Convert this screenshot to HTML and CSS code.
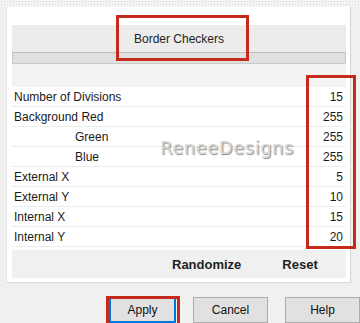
FILE: index.html
```html
<!DOCTYPE html>
<html lang="en">
<head>
  <meta charset="UTF-8" />
  <meta name="viewport" content="width=device-width, initial-scale=1.0"/>
  <title>Border Checkers</title>
  <link rel="stylesheet" href="styles.css">
</head>
<body>
  <div class="texture"></div>
  <div class="dialog">
    <div class="panel">
      <div class="header">Border Checkers</div>
      <div class="slider"></div>
      <div class="gap"></div>
      <div class="rows">
        <div class="row"><span>Number of Divisions</span><span>15</span></div>
        <div class="row"><span>Background Red</span><span>255</span></div>
        <div class="row"><span class="indent">Green</span><span>255</span></div>
        <div class="row"><span class="indent">Blue</span><span>255</span></div>
        <div class="row"><span>External X</span><span>5</span></div>
        <div class="row"><span>External Y</span><span>10</span></div>
        <div class="row"><span>Internal X</span><span>15</span></div>
        <div class="row"><span>Internal Y</span><span>20</span></div>
      </div>
      <div class="actions">
        <span class="randomize">Randomize</span>
        <span class="reset">Reset</span>
      </div>
    </div>

    <div class="buttons">
      <button class="btn btn-default">Apply</button>
      <button class="btn">Cancel</button>
      <button class="btn">Help</button>
    </div>

    <div class="watermark">ReneeDesigns</div>
    <div class="mark mark-title"></div>
    <div class="mark mark-values"></div>
    <div class="mark mark-apply"></div>
  </div>
</body>
</html>
```

FILE: styles.css
```css
body {
  margin: 0;
  background: #f0f0f0;
  font-family: "Liberation Sans", Arial, sans-serif;
  font-size: 12px;
  color: #1a1a1a;
  width: 360px;
  height: 323px;
  overflow: hidden;
}

.texture {
  height: 7px;
  background-color: #f4f4f4;
  background-image: radial-gradient(#d6d6d6 0.7px, transparent 1px);
  background-size: 3px 3px;
}

.dialog {
  position: relative;
}

.panel {
  margin-left: 6px;
  width: 345px;
  height: 276px;
  background: #fff;
  border-left: 1px solid #e4e4e4;
  border-right: 1px solid #d4d4d4;
  border-bottom: 1px solid #dadada;
  padding: 18px 4px 0 5px;
  box-sizing: border-box;
}

.header {
  height: 27px;
  background: #ececec;
  display: flex;
  align-items: center;
  justify-content: center;
  font-size: 12px;
  color: #222;
}

.slider {
  height: 10px;
  background: #e0e0e0;
  border: 1px solid #c8c8c8;
  border-top-color: #bdbdbd;
}

.gap {
  height: 23px;
  background: #f3f3f3;
}

.rows {
  background: #fff;
}

.row {
  height: 20px;
  display: flex;
  align-items: center;
  justify-content: space-between;
  border-bottom: 1px solid #ececec;
  box-sizing: border-box;
  padding: 0 3px 0 2px;
  font-size: 12px;
}

.indent {
  padding-left: 61px;
}

.actions {
  margin-top: 3px;
  height: 28px;
  background: #f0f0f0;
  display: flex;
  align-items: center;
  font-weight: bold;
  font-size: 13px;
  color: #222;
}

.randomize {
  margin-left: 160px;
}

.reset {
  margin-left: 41px;
}

.buttons {
  display: flex;
  padding: 14px 0 0 109px;
  gap: 17px;
}

.btn {
  width: 73px;
  height: 26px;
  background: #e1e1e1;
  border: 1px solid #adadad;
  font-family: "Liberation Sans", Arial, sans-serif;
  font-size: 12px;
  color: #111;
  padding: 0;
}

.btn-default {
  width: 67px;
  border: 2px solid #0078d7;
}

.btn + .btn {
  width: 75px;
}

.watermark {
  position: absolute;
  left: 160px;
  top: 130px;
  font-family: "DejaVu Sans", sans-serif;
  font-size: 18px;
  letter-spacing: 0.5px;
  color: #d8d8d8;
  text-shadow: 1px 1px 1px #8a8a8a;
}

.mark {
  position: absolute;
  border: 3px solid #c42b1c;
  box-sizing: border-box;
}

.mark-title {
  left: 116px;
  top: 8px;
  width: 133px;
  height: 46px;
}

.mark-values {
  left: 306px;
  top: 68px;
  width: 50px;
  height: 174px;
}

.mark-apply {
  left: 106px;
  top: 289px;
  width: 74px;
  height: 40px;
}
```
